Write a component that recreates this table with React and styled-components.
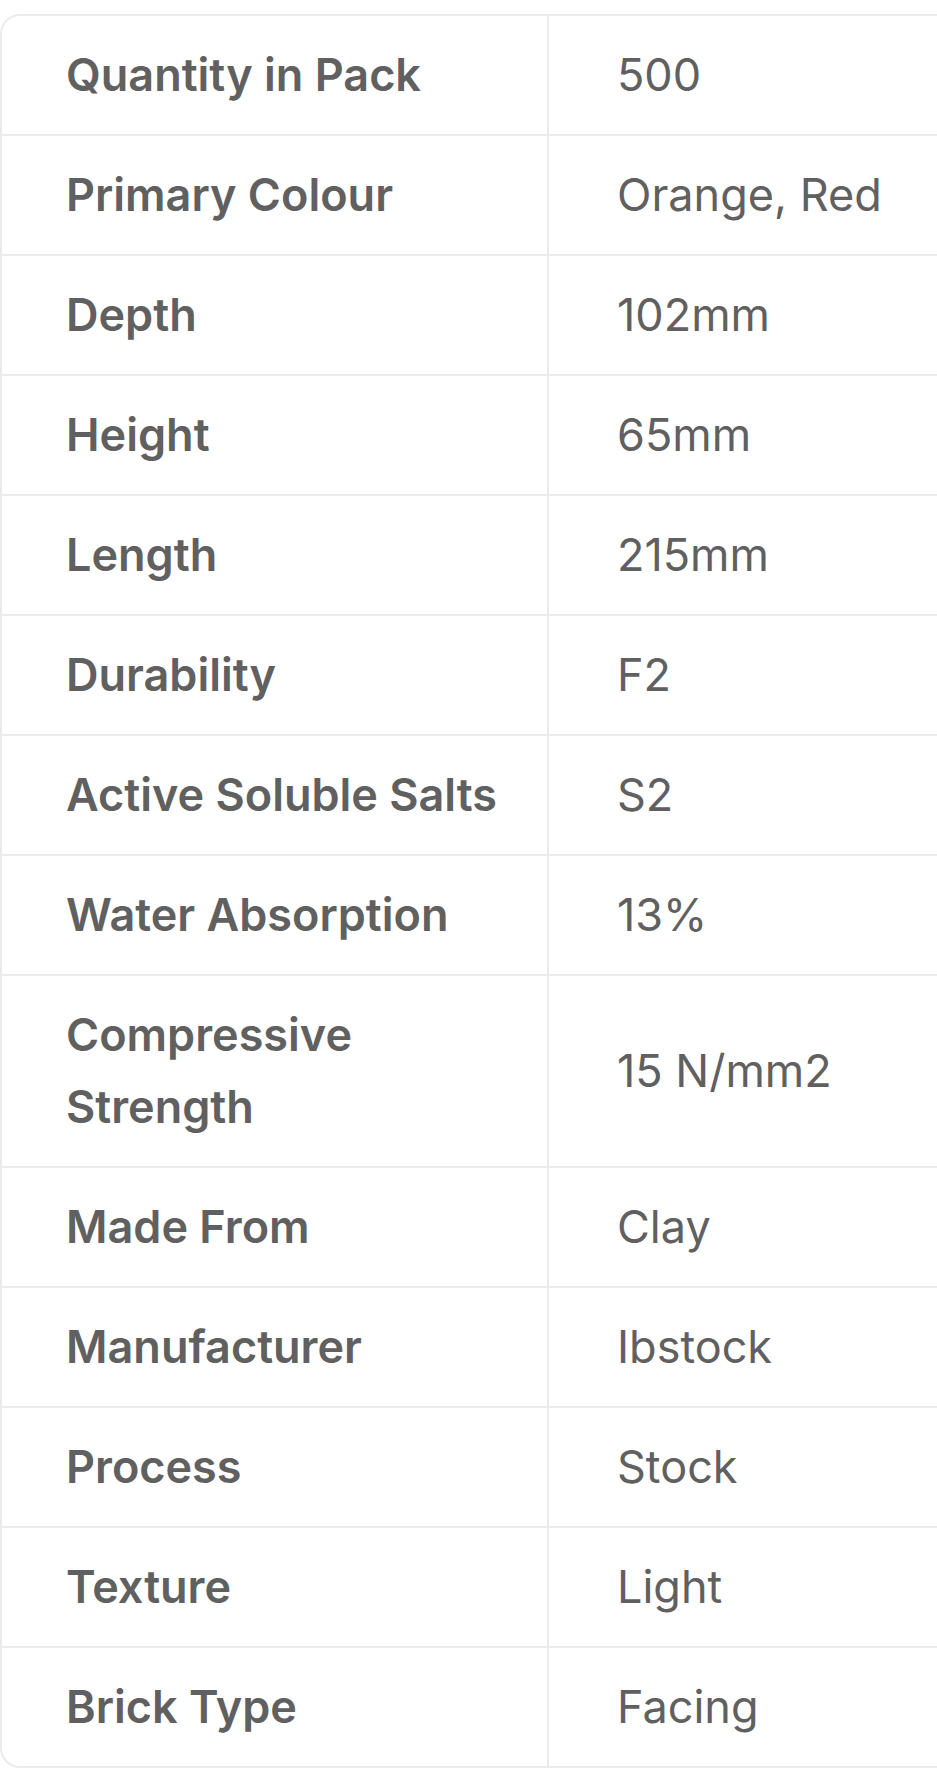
import React from "react";
import styled, { createGlobalStyle } from "styled-components";

const specs = [
  ["Quantity in Pack", "500"],
  ["Primary Colour", "Orange, Red"],
  ["Depth", "102mm"],
  ["Height", "65mm"],
  ["Length", "215mm"],
  ["Durability", "F2"],
  ["Active Soluble Salts", "S2"],
  ["Water Absorption", "13%"],
  ["Compressive Strength", "15 N/mm2"],
  ["Made From", "Clay"],
  ["Manufacturer", "Ibstock"],
  ["Process", "Stock"],
  ["Texture", "Light"],
  ["Brick Type", "Facing"],
];

const GlobalStyle = createGlobalStyle`
  html, body {
    margin: 0;
    padding: 0;
    background: #ffffff;
    overflow: hidden;
  }
  body {
    font-family: Inter, "Noto Sans", Arial, sans-serif;
    -webkit-font-smoothing: antialiased;
  }
`;

const Page = styled.div`
  padding-top: 14px;
  width: 937px;
  overflow: hidden;
`;

const SpecTable = styled.div`
  width: 1200px;
  border: 2px solid #ebebeb;
  border-radius: 20px;
  overflow: hidden;
  display: flex;
  flex-direction: column;
`;

const Row = styled.div`
  display: grid;
  grid-template-columns: 547px 1fr;
  border-bottom: 2px solid #ebebeb;
  &:last-child {
    border-bottom: none;
  }
`;

const Cell = styled.div`
  display: flex;
  align-items: center;
  padding: 23px 40px 23px ${(p) => (p.$label ? "64px" : "68px")};
  font-size: 45px;
  line-height: 72px;
  color: #606060;
  font-weight: ${(p) => (p.$label ? 600 : 400)};
  border-right: ${(p) => (p.$label ? "2px solid #ebebeb" : "none")};
`;

const App = () => {
  return (
    <>
      <GlobalStyle />
      <Page>
        <SpecTable>
          {specs.map(([label, value]) => (
            <Row key={label}>
              <Cell $label>{label}</Cell>
              <Cell>{value}</Cell>
            </Row>
          ))}
        </SpecTable>
      </Page>
    </>
  );
};

export default App;
